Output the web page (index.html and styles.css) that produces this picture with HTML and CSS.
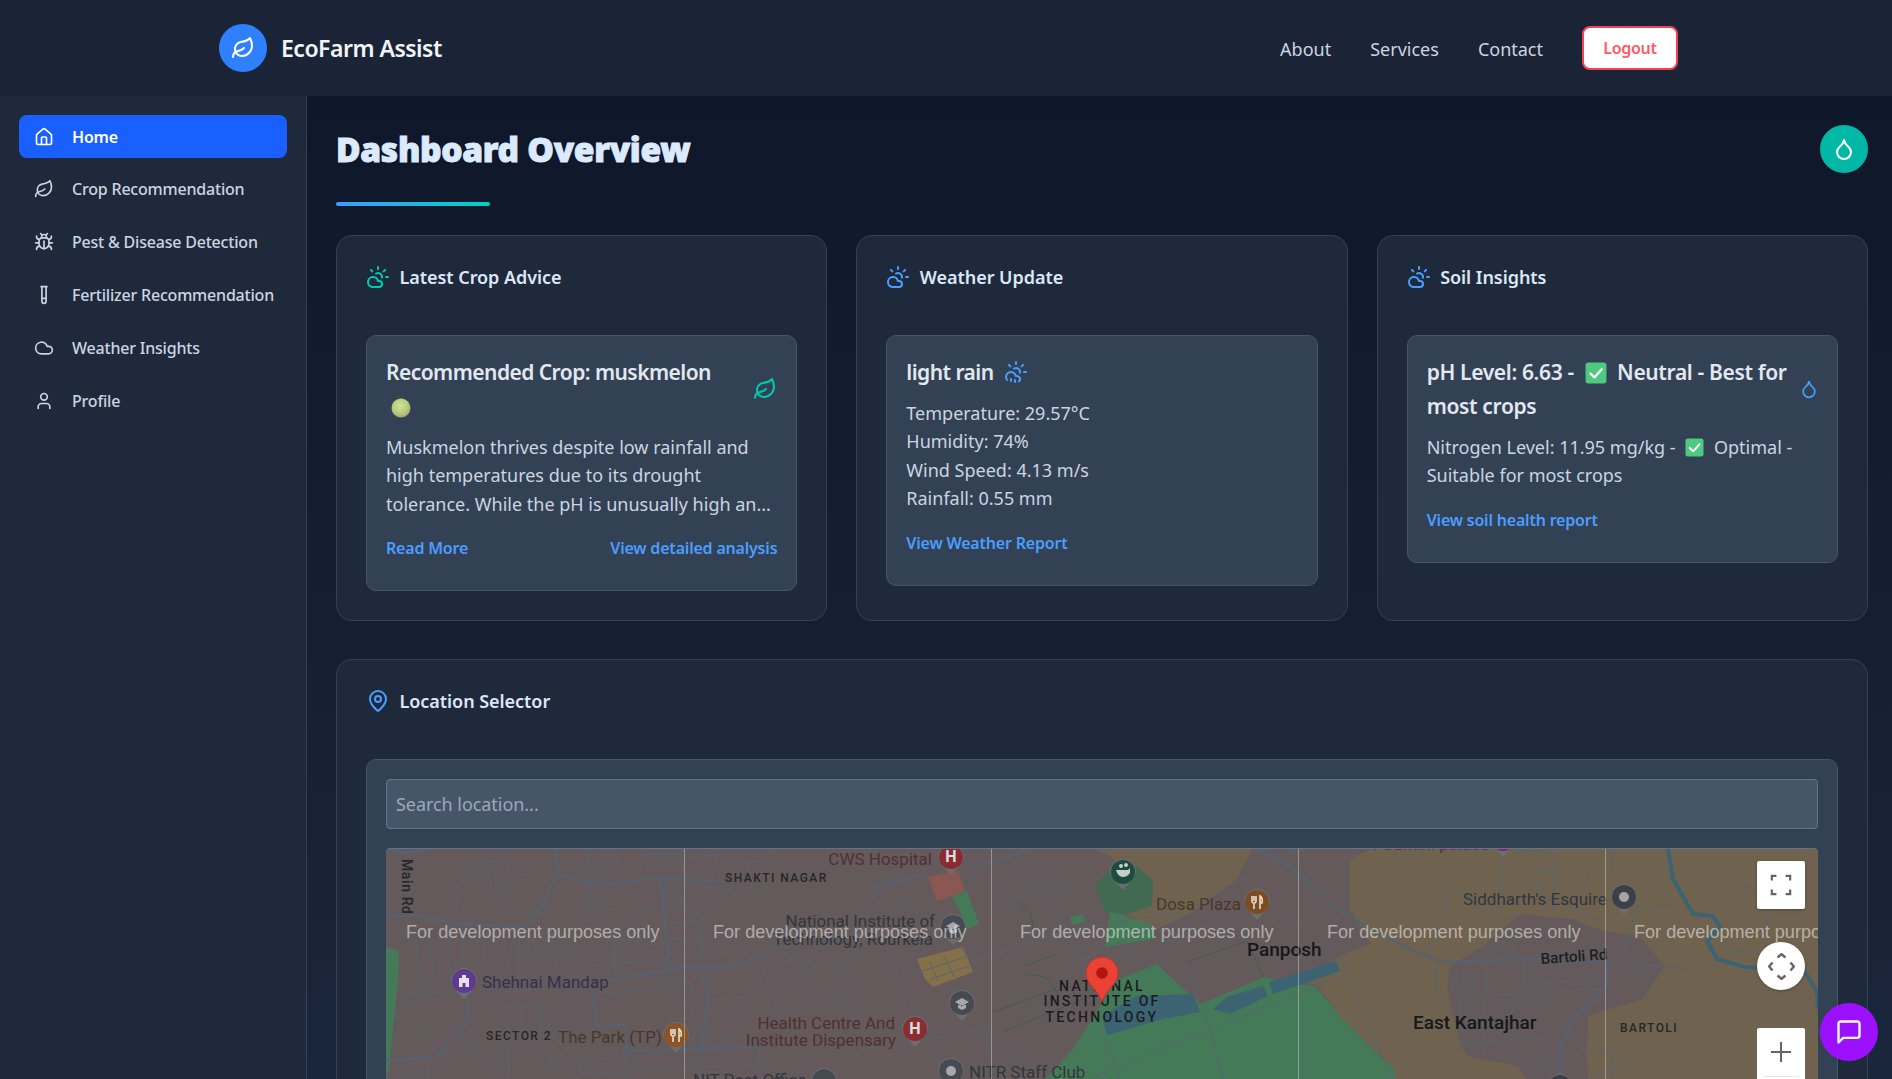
FILE: index.html
```html
<!DOCTYPE html>
<html lang="en">
<head>
<meta charset="utf-8">
<title>EcoFarm Assist</title>
<link rel="stylesheet" href="styles.css">
</head>
<body>
<svg class="sprite" aria-hidden="true">
  <symbol id="i-leaf" viewBox="0 0 24 24"><path d="M11 20A7 7 0 0 1 9.8 6.1C15.5 5 17 4.48 19 2c1 2 2 4.18 2 8 0 5.5-4.78 10-10 10Z"/><path d="M2 21c0-3 1.85-5.36 5.08-6C9.5 14.52 12 13 13 12"/></symbol>
  <symbol id="i-home" viewBox="0 0 24 24"><path d="M15 21v-8a1 1 0 0 0-1-1h-4a1 1 0 0 0-1 1v8"/><path d="M3 10a2 2 0 0 1 .709-1.528l7-5.999a2 2 0 0 1 2.582 0l7 5.999A2 2 0 0 1 21 10v9a2 2 0 0 1-2 2H5a2 2 0 0 1-2-2z"/></symbol>
  <symbol id="i-bug" viewBox="0 0 24 24"><path d="m8 2 1.88 1.88"/><path d="M14.12 3.88 16 2"/><path d="M9 7.13v-1a3.003 3.003 0 1 1 6 0v1"/><path d="M12 20c-3.3 0-6-2.7-6-6v-3a4 4 0 0 1 4-4h4a4 4 0 0 1 4 4v3c0 3.3-2.7 6-6 6"/><path d="M12 20v-9"/><path d="M6.53 9C4.6 8.8 3 7.1 3 5"/><path d="M6 13H2"/><path d="M3 21c0-2.1 1.7-3.9 3.8-4"/><path d="M20.97 5c0 2.1-1.6 3.8-3.5 4"/><path d="M22 13h-4"/><path d="M17.2 17c2.1.1 3.8 1.9 3.8 4"/></symbol>
  <symbol id="i-tube" viewBox="0 0 24 24"><path d="M14.5 2v17.5c0 1.4-1.1 2.5-2.5 2.5c-1.4 0-2.5-1.1-2.5-2.5V2"/><path d="M8.5 2h7"/><path d="M14.5 16h-5"/></symbol>
  <symbol id="i-cloud" viewBox="0 0 24 24"><path d="M17.5 19H9a7 7 0 1 1 6.71-9h1.79a4.5 4.5 0 1 1 0 9Z"/></symbol>
  <symbol id="i-user" viewBox="0 0 24 24"><path d="M19 21v-2a4 4 0 0 0-4-4H9a4 4 0 0 0-4 4v2"/><circle cx="12" cy="7" r="4"/></symbol>
  <symbol id="i-drop" viewBox="0 0 24 24"><path d="M12 22a7 7 0 0 0 7-7c0-2-1-3.9-3-5.5s-3.5-4-4-6.5c-.5 2.5-2 4.9-4 6.5C6 11.1 5 13 5 15a7 7 0 0 0 7 7z"/></symbol>
  <symbol id="i-sun" viewBox="0 0 24 24"><path d="M12 2v2"/><path d="m4.93 4.93 1.41 1.41"/><path d="M20 12h2"/><path d="m19.07 4.93-1.41 1.41"/><path d="M15.947 12.65a4 4 0 0 0-5.925-4.128"/><path d="M13 22H7a5 5 0 1 1 4.9-6H13a3 3 0 0 1 0 6Z"/></symbol>
  <symbol id="i-rain" viewBox="0 0 24 24"><path d="M12 2v2"/><path d="m4.93 4.93 1.41 1.41"/><path d="M20 12h2"/><path d="m19.07 4.93-1.41 1.41"/><path d="M15.947 12.65a4 4 0 0 0-5.925-4.128"/><path d="M3 20a5 5 0 1 1 8.9-4H13a3 3 0 0 1 2 5.24"/><path d="M11 20v2"/><path d="M7 19v2"/></symbol>
  <symbol id="i-pin" viewBox="0 0 24 24"><path d="M20 10c0 6-8 12-8 12s-8-6-8-12a8 8 0 0 1 16 0Z"/><circle cx="12" cy="10" r="3"/></symbol>
  <symbol id="i-chat" viewBox="0 0 24 24"><path d="M21 15a2 2 0 0 1-2 2H7l-4 4V5a2 2 0 0 1 2-2h14a2 2 0 0 1 2 2z"/></symbol>
  <radialGradient id="melon" cx="45%" cy="38%" r="65%"><stop offset="0" stop-color="#d3e29a"/><stop offset=".65" stop-color="#b4ca78"/><stop offset="1" stop-color="#a89a7c"/></radialGradient>
  <symbol id="e-melon" viewBox="0 0 20 24"><path d="M10 5 7 2M10 5l3-3" fill="none" stroke="#6b4a30" stroke-width="1"/><circle cx="10" cy="14" r="9.5" fill="url(#melon)"/></symbol>
  <symbol id="e-check" viewBox="0 0 20 20"><rect x=".5" y=".5" width="19" height="19" rx="2.5" fill="#4fc97f"/><path d="M5 10.5 8.6 14 15.2 6.6" fill="none" stroke="#fff" stroke-width="2" stroke-linecap="round" stroke-linejoin="round"/></symbol>
</svg>

<header class="topbar">
  <div class="brand">
    <span class="brand-logo"><svg class="icon icon-24 stroke-white"><use href="#i-leaf"/></svg></span>
    <span class="brand-name">EcoFarm Assist</span>
  </div>
  <nav class="topnav">
    <a class="topnav-link">About</a>
    <a class="topnav-link">Services</a>
    <a class="topnav-link">Contact</a>
    <button class="logout">Logout</button>
  </nav>
</header>

<div class="shell">
  <aside class="sidebar">
    <a class="side-item active"><svg class="icon icon-20"><use href="#i-home"/></svg>Home</a>
    <a class="side-item"><svg class="icon icon-20"><use href="#i-leaf"/></svg>Crop Recommendation</a>
    <a class="side-item"><svg class="icon icon-20"><use href="#i-bug"/></svg>Pest &amp; Disease Detection</a>
    <a class="side-item"><svg class="icon icon-20"><use href="#i-tube"/></svg>Fertilizer Recommendation</a>
    <a class="side-item"><svg class="icon icon-20"><use href="#i-cloud"/></svg>Weather Insights</a>
    <a class="side-item"><svg class="icon icon-20"><use href="#i-user"/></svg>Profile</a>
  </aside>

  <main class="main">
    <div class="title-row">
      <h1 class="page-title">Dashboard Overview</h1>
      <span class="drop-btn"><svg class="icon icon-24 stroke-white"><use href="#i-drop"/></svg></span>
    </div>
    <div class="title-rule"></div>

    <section class="card-grid">
      <article class="card">
        <h2 class="card-head"><svg class="icon icon-24 stroke-teal"><use href="#i-sun"/></svg>Latest Crop Advice</h2>
        <div class="panel">
          <div class="panel-title">
            <h3 class="panel-heading">Recommended Crop: muskmelon <svg class="emoji melon"><use href="#e-melon"/></svg></h3>
            <svg class="icon icon-24 stroke-teal"><use href="#i-leaf"/></svg>
          </div>
          <p class="panel-text clamp">Muskmelon thrives despite low rainfall and high temperatures due to its drought tolerance. While the pH is unusually high an...</p>
          <div class="panel-links">
            <a class="link">Read More</a>
            <a class="link">View detailed analysis</a>
          </div>
        </div>
      </article>

      <article class="card">
        <h2 class="card-head"><svg class="icon icon-24 stroke-blue"><use href="#i-sun"/></svg>Weather Update</h2>
        <div class="panel">
          <div class="panel-title start">
            <h3 class="panel-heading">light rain</h3>
            <svg class="icon icon-24 stroke-blue"><use href="#i-rain"/></svg>
          </div>
          <p class="panel-text">Temperature: 29.57°C<br>Humidity: 74%<br>Wind Speed: 4.13 m/s<br>Rainfall: 0.55 mm</p>
          <div class="panel-links"><a class="link">View Weather Report</a></div>
        </div>
      </article>

      <article class="card">
        <h2 class="card-head"><svg class="icon icon-24 stroke-blue"><use href="#i-sun"/></svg>Soil Insights</h2>
        <div class="panel">
          <div class="panel-title tight">
            <h3 class="panel-heading heading-wide">pH Level: 6.63 - <svg class="emoji check-lg"><use href="#e-check"/></svg> Neutral - Best for most crops</h3>
            <svg class="icon icon-20 stroke-blue"><use href="#i-drop"/></svg>
          </div>
          <p class="panel-text">Nitrogen Level: 11.95 mg/kg - <svg class="emoji"><use href="#e-check"/></svg> Optimal - Suitable for most crops</p>
          <div class="panel-links"><a class="link">View soil health report</a></div>
        </div>
      </article>
    </section>

    <section class="card location">
      <h2 class="card-head"><svg class="icon icon-24 stroke-blue"><use href="#i-pin"/></svg>Location Selector</h2>
      <div class="panel panel-location">
        <input class="search" type="text" placeholder="Search location...">
        <div class="map">
          <svg class="map-canvas" viewBox="0 0 1432 400" aria-label="Map of Rourkela">
            <rect width="1432" height="400" fill="#645a5b"/>
            <g class="tan">
              <polygon points="711,0 866,0 851,30 807,63 767,82 741,65 765,30 735,15"/>
              <polygon points="964,10 986,0 1432,0 1432,400 1009,400 1009,220 954,168 932,137 915,133 958,105 985,95 964,60"/>
            </g>
            <polygon fill="#645a5b" points="1134,65 1187,70 1217,82 1254,88 1279,117 1257,150 1202,167 1201,207 1202,231 1141,231 1131,217 1081,207 1074,193 1061,140 1064,117 1097,97"/>
            <polygon fill="#857149" points="531,110 577,98 587,123 547,138 539,130"/>
            <polygon fill="#8a5850" points="542,28 572,22 579,42 551,52"/>
            <g class="green">
              <polygon points="0,97 13,103 12,133 3,217 0,231"/>
              <polygon points="566,47 581,42 593,75 582,80"/>
              <polygon points="684,68 697,65 699,73 686,76"/>
              <polygon points="724,62 769,77 767,90 719,98"/>
              <polygon points="659,231 687,200 704,173 729,132 771,115 803,145 815,155 874,130 877,128 911,135 929,137 954,167 974,187 994,207 1009,220 1009,231"/>
            </g>
            <polygon fill="#426a52" points="709,37 724,20 751,17 767,32 766,57 741,65 719,63"/>
            <g class="water">
              <polygon points="716,167 751,147 807,145 814,163 777,170 721,186"/>
              <polygon points="827,160 841,148 877,137 882,147 844,165"/>
              <polygon points="883,133 950,112 954,122 887,145"/>
            </g>
            <path class="river" d="M1282 0 1287 30 1307 65 1327 67 1334 78 1321 92 1331 110 1359 118 1419 123 1431 143 1432 160"/>
            <path class="road-main" d="M170 0 172 20 157 57 138 78M172 25 213 37 273 29 337 33M275 29 282 113 283 123M220 132 297 118 347 117 400 97M0 68 33 66 45 72M43 70 77 75 138 78M313 122 323 143 315 200M82 150 82 173 50 208 0 212M205 143 212 178 240 175M240 202 373 198M0 0 20 4 40 0M487 50 494 37 540 25M580 15 600 15 640 2M954 62 997 87 1054 113 1154 110 1222 113M1222 113 1220 140 1187 170 1174 200 1174 231M870 0 904 17 954 62"/>
            <circle class="road-ring" cx="240" cy="202" r="4"/>
            <path class="road" d="M70 20Q100 14 103 12L120 10 122 40 105 42 102 14M103 16Q75 25 72 40 68 60 77 75L95 60 118 50 122 40M120 28 150 25M200 0 203 60M220 0 220 35M228 0 232 15 250 55M200 17 218 17M200 28 218 28M203 40 210 60 195 60M210 60 228 60M180 75 205 72 225 72 240 65 270 60M255 0 263 25M260 5 293 5M272 8 293 8 293 17 272 17M293 0 298 25M298 10 330 5 360 15 390 5M330 5 333 30M360 15 363 30M315 37 345 40M365 35 367 45M277 40 293 40 296 55M280 55 320 55 323 65 315 72 280 75M283 90 316 88M283 105 316 103 316 88M316 65 316 110M225 92 278 88M228 100 280 95M228 92 228 115 280 110M182 103 230 103 228 130M182 103 185 117 228 115M316 108 342 103 347 115M30 88 33 135M45 88 48 130M60 88 65 130M77 80 77 115M95 85 103 130M118 90 122 125M133 90 133 130M148 90 150 130M165 75 170 125M135 105 175 100 180 115M18 133 60 132M17 147 17 157 35 155 35 143M17 145 120 143 160 140M122 158 155 158 170 190 185 205M122 158 122 185M135 158 135 180M153 158 155 180M60 170 85 192 100 215M33 180 65 210M85 200 70 218M100 195 165 200 165 220M123 198 123 231M165 215 240 208M190 143 190 190M243 133 243 145M208 145 290 140 283 130M282 133 305 133 307 155 285 155M307 155 307 190 290 190M283 170 307 168M322 150 360 148 367 157 340 165 322 165M320 190 350 190M240 175 240 231M190 208 195 225 240 223 375 215M313 200 315 231M20 215 20 231M30 205 30 231M43 210 43 231M100 225 120 215M373 198 375 231M377 120 480 83M377 120 393 167 480 140M393 167 430 231M445 115 470 180M403 135 480 105M405 135 408 148M500 97 530 167 554 217M534 50 587 113M587 113 687 80 794 63M617 33 644 23 656 40 629 50 617 33M651 13 687 97 714 153M607 67 630 52M677 27 670 40M654 38 695 38M694 112 791 67M707 120 860 63 884 43M807 63 841 37 860 30 911 0M704 230 954 127M714 177 734 231M796 110 826 187 837 231M474 200 604 180 607 231M607 203 637 207 651 223M887 80 911 70 927 77M954 107 1007 231M1014 23 1021 5 1031 10M1044 103 1064 38 1087 50 1110 75 1134 65M1051 117 1051 143 1077 183M1111 67 1117 10M1137 23 1171 18 1167 67M1174 17 1174 37M1187 20 1184 33M1206 20 1194 50M1127 0 1167 5 1166 23M1137 32 1161 35M1141 40 1187 60 1217 73M1101 100 1111 70M1117 90 1119 110M1127 93 1127 110M1067 127 1067 140 1084 140M1071 117 1074 200M1086 113 1086 197M1101 113 1101 147M1137 113 1137 137 1217 128M1101 147 1161 143 1217 140M1161 143 1154 157 1131 150 1124 167M1074 193 1161 190M1097 150 1097 207M1154 193 1154 213 1141 213 1171 213M1194 200 1227 203 1227 230M1241 207 1239 217 1194 231M1226 113 1306 120M1256 117 1256 130M1237 107 1251 57 1286 55M1237 90 1247 93M1227 0 1227 23 1241 13M1352 32 1371 43M1337 98 1351 102 1374 100M1404 177 1412 173M1384 60 1376 90M390 130 404 125 430 118M0 133 12 132M500 50 520 60 530 40M543 112 552 132M558 106 568 128M536 122 582 107M545 130 586 116"/>
            <path class="trail" d="M631 53 645 65 648 85M607 163 670 140M617 183 704 147M640 117 670 105M640 125 660 128 672 145M801 113 861 92M861 92 877 128"/>

            <g class="labels">
              <text class="lbl lbl-dark" transform="translate(16 10) rotate(90)">Main Rd</text>
              <text class="lbl-caps" x="339" y="33">SHAKTI NAGAR</text>
              <text class="lbl lbl-red" x="546" y="16" text-anchor="end">CWS Hospital</text>
              <text class="lbl lbl-grey" x="549" y="78" text-anchor="end">National Institute of</text>
              <text class="lbl lbl-grey" x="547" y="96" text-anchor="end">Technology, Rourkela</text>
              <text class="lbl lbl-purple" x="96" y="139">Shehnai Mandap</text>
              <text class="lbl-caps" x="100" y="191">SECTOR 2</text>
              <text class="lbl lbl-brown" x="172" y="194">The Park (TP)</text>
              <text class="lbl lbl-red" x="509" y="180" text-anchor="end">Health Centre And</text>
              <text class="lbl lbl-red" x="510" y="197" text-anchor="end">Institute Dispensary</text>
              <text class="lbl lbl-grey" x="307" y="237">NIT Post Office</text>
              <text class="lbl lbl-grey" x="583" y="229">NITR Staff Club</text>
              <text class="lbl lbl-brown" x="770" y="61">Dosa Plaza</text>
              <text class="lbl lbl-grey" x="1077" y="56">Siddharth's Esquire</text>
              <text class="lbl lbl-pink" x="987" y="1">Padmini palace</text>
              <text class="lbl-town" x="861" y="107">Panposh</text>
              <text class="lbl-town" x="1027" y="180">East Kantajhar</text>
              <text class="lbl-road" transform="translate(1155 115) rotate(-4)">Bartoli Rd</text>
              <text class="lbl-caps" x="1234" y="183">BARTOLI</text>
              <text class="lbl-inst" x="716" y="142" text-anchor="middle">NATIONAL</text>
              <text class="lbl-inst" x="716" y="157" text-anchor="middle">INSTITUTE OF</text>
              <text class="lbl-inst" x="716" y="173" text-anchor="middle">TECHNOLOGY</text>
            </g>

            <g class="pins">
              <g transform="translate(78 132)"><path class="pin-shape" d="M-13 0A13 13 0 1 1 13 0Q12 6 0 18-12 6-13 0Z"/><circle r="12" fill="#5f3a91"/><path d="M-5 6V-3H-2V-6H2V-3H5V6ZM-1.5 6V2H1.5V6Z" fill="#e8e2f0" fill-rule="evenodd"/></g>
              <g transform="translate(290 186)"><path class="pin-shape" d="M-13 0A13 13 0 1 1 13 0Q12 6 0 18-12 6-13 0Z"/><circle r="12" fill="#8a5426"/><path d="M-5-6V-1Q-5 1-3 1V7M-3-6V-1M-1-6V-1Q-1 1-3 1M3 7V-6Q6-4 5 1H3" class="pin-glyph"/></g>
              <g transform="translate(565 8)"><path class="pin-shape" d="M-13 0A13 13 0 1 1 13 0Q12 6 0 18-12 6-13 0Z"/><circle r="12" fill="#8a2d33"/><text class="pin-h" text-anchor="middle" y="5">H</text></g>
              <g transform="translate(567 78)"><path class="pin-shape" d="M-13 0A13 13 0 1 1 13 0Q12 6 0 18-12 6-13 0Z"/><circle r="12" fill="#464a51"/><path d="M-7-1 0-5 7-1 0 3ZM-4 2V5L0 7 4 5V2" fill="#a8a8aa"/></g>
              <g transform="translate(576 154)"><path class="pin-shape" d="M-13 0A13 13 0 1 1 13 0Q12 6 0 18-12 6-13 0Z"/><circle r="12" fill="#464a51"/><path d="M-7-1 0-5 7-1 0 3ZM-4 2V5L0 7 4 5V2" fill="#a8a8aa"/></g>
              <g transform="translate(529 180)"><path class="pin-shape" d="M-13 0A13 13 0 1 1 13 0Q12 6 0 18-12 6-13 0Z"/><circle r="12" fill="#8a2d33"/><text class="pin-h" text-anchor="middle" y="5">H</text></g>
              <g transform="translate(565 222)"><path class="pin-shape" d="M-13 0A13 13 0 1 1 13 0Q12 6 0 18-12 6-13 0Z"/><circle r="12" fill="#464a51"/><circle r="5" fill="#a8a8aa"/></g>
              <g transform="translate(438 232)"><path class="pin-shape" d="M-13 0A13 13 0 1 1 13 0Q12 6 0 18-12 6-13 0Z"/><circle r="12" fill="#464a51"/></g>
              <g transform="translate(737 23)"><path class="pin-shape" d="M-13 0A13 13 0 1 1 13 0Q12 6 0 18-12 6-13 0Z"/><circle r="12" fill="#1e4c40"/><path d="M-7-2H5L7-4V1Q4 5 0 5-5 5-7-2ZM-4-6A2 2 0 1 1-4-5.9ZM1-7A2 2 0 1 1 1-6.9Z" fill="#c3cfc8"/></g>
              <g transform="translate(871 53)"><path class="pin-shape" d="M-13 0A13 13 0 1 1 13 0Q12 6 0 18-12 6-13 0Z"/><circle r="12" fill="#7c4c22"/><path d="M-5-6V-1Q-5 1-3 1V7M-3-6V-1M-1-6V-1Q-1 1-3 1M3 7V-6Q6-4 5 1H3" class="pin-glyph"/></g>
              <g transform="translate(1238 48)"><path class="pin-shape" d="M-13 0A13 13 0 1 1 13 0Q12 6 0 18-12 6-13 0Z"/><circle r="12" fill="#3d4048"/><circle r="5" fill="#a5a5a5"/></g>
              <g transform="translate(1117 -10)"><path class="pin-shape" d="M-13 0A13 13 0 1 1 13 0Q12 6 0 18-12 6-13 0Z"/><circle r="12" fill="#8a1f66"/></g>
              <g transform="translate(1174 238)"><path class="pin-shape" d="M-13 0A13 13 0 1 1 13 0Q12 6 0 18-12 6-13 0Z"/><circle r="12" fill="#3d4048"/></g>
            </g>

            <path class="lines" d="M298.5 0V400M605.5 0V400M912.5 0V400M1219.5 0V400"/>
            <g class="watermark">
              <text x="20" y="89">For development purposes only</text>
              <text x="327" y="89">For development purposes only</text>
              <text x="634" y="89">For development purposes only</text>
              <text x="941" y="89">For development purposes only</text>
              <text x="1248" y="89">For development purposes only</text>
            </g>
            <path d="M716 153C712 140 700 136 700 124A16 16 0 0 1 732 124C732 136 720 140 716 153Z" fill="#ea4335" stroke="#c5332a" stroke-width="1"/>
            <circle cx="716" cy="124" r="5.8" fill="#b31412"/>
          </svg>

          <button class="map-ctl map-full" aria-label="Fullscreen">
            <svg viewBox="0 0 24 24" class="ctl-icon"><path d="M2 7V2H7M17 2H22V7M22 17V22H17M7 22H2V17"/></svg>
          </button>
          <button class="map-ctl map-pan" aria-label="Pan">
            <svg viewBox="0 0 24 24" class="ctl-icon pan"><path d="M8.5 4 12 1 15.5 4M8.5 20 12 23 15.5 20M4 8.5 1 12 4 15.5M20 8.5 23 12 20 15.5"/></svg>
          </button>
          <div class="map-ctl map-zoom">
            <svg viewBox="0 0 24 24" class="ctl-icon plus"><path d="M12 1V23M1 12H23"/></svg>
            <span class="zoom-sep"></span>
          </div>
        </div>
      </div>
    </section>
  </main>
</div>

<button class="chat-fab" aria-label="Chat"><svg class="icon icon-28 stroke-white"><use href="#i-chat"/></svg></button>
</body>
</html>
```

FILE: styles.css
```css
* { box-sizing: border-box; }
html, body { margin: 0; height: 100%; }
body {
  display: flex;
  flex-direction: column;
  height: 100vh;
  overflow: hidden;
  background: #0f172a;
  color: #e2e8f0;
  font-family: "Noto Sans", "Open Sans", sans-serif;
}
.sprite { position: absolute; width: 0; height: 0; }
.icon { flex: none; fill: none; stroke: currentColor; stroke-width: 2; stroke-linecap: round; stroke-linejoin: round; }
.icon-20 { width: 20px; height: 20px; }
.icon-24 { width: 24px; height: 24px; }
.icon-28 { width: 28px; height: 28px; }
.stroke-white { color: #fff; }
.stroke-teal { color: #00c9b1; }
.stroke-blue { color: #4a9eff; }
.emoji { width: 19px; height: 19px; vertical-align: -3px; margin: 0 5px; }
.check-lg { width: 22px; height: 22px; vertical-align: -4px; margin: 0 5px 0 6px; }
.melon { width: 20px; height: 24px; vertical-align: -4px; margin: 0 2px 0 5px; }

/* Top bar */
.topbar {
  flex: none;
  height: 96px;
  display: flex;
  align-items: center;
  justify-content: space-between;
  padding: 0 214px 0 219px;
  background: #1b2437;
}
.brand { display: flex; align-items: center; gap: 14px; }
.brand-logo {
  width: 48px; height: 48px;
  display: flex; align-items: center; justify-content: center;
  border-radius: 50%;
  background: #2f80ff;
}
.brand-name { font-size: 23px; font-weight: 600; letter-spacing: -.5px; color: #f1f5f9; }
.topnav { display: flex; align-items: center; }
.topnav-link { font-size: 18px; color: #cbd5e1; margin-right: 39px; margin-top: 2px; }
.logout {
  width: 96px; height: 44px;
  margin-top: -1px;
  border: 2px solid #ef4455;
  border-radius: 8px;
  background: #fff;
  color: #ff5a65;
  font: 600 16px "Noto Sans", sans-serif;
  letter-spacing: -.3px;
}

/* Shell */
.shell { flex: 1; min-height: 0; display: flex; }
.sidebar {
  flex: none;
  width: 307px;
  display: flex;
  flex-direction: column;
  gap: 9.85px;
  padding: 19px;
  background: #1e293b;
  border-right: 1px solid #334155;
}
.side-item {
  display: flex;
  align-items: center;
  gap: 18px;
  height: 43px;
  padding-left: 15px;
  border-radius: 8px;
  color: #cbd5e1;
  font-size: 16px;
  font-weight: 500;
  letter-spacing: -.2px;
  white-space: nowrap;
}
.side-item.active { background: #1a5fff; color: #fff; font-weight: 600; }

/* Main */
.main {
  flex: 1;
  min-width: 0;
  overflow: hidden;
  padding: 29px 24px 0 29px;
  background: linear-gradient(180deg, #0f172a 0%, #1a263b 100%);
}
.title-row { display: flex; align-items: center; justify-content: space-between; height: 48px; }
.page-title {
  margin: 0;
  font-size: 33.5px;
  font-weight: 900;
  letter-spacing: -.3px;
  color: #dbeafe;
  -webkit-text-stroke: 1px #dbeafe;
  text-shadow: 0 1px 2px rgba(0,0,0,.4);
}
.drop-btn {
  width: 48px; height: 48px;
  display: flex; align-items: center; justify-content: center;
  border-radius: 50%;
  background: #00b8a5;
}
.title-rule {
  width: 154px; height: 4px;
  margin-top: 29px;
  border-radius: 2px;
  background: linear-gradient(90deg, #3f9bff, #00d1c0);
}

/* Cards */
.card-grid {
  display: grid;
  grid-template-columns: repeat(3, minmax(0, 1fr));
  gap: 29px;
  margin-top: 29px;
}
.card {
  padding: 29px;
  border: 1px solid #334155;
  border-radius: 16px;
  background: #1e293b;
}
.card-head {
  display: flex;
  align-items: center;
  gap: 9.5px;
  height: 23px;
  margin: 0 0 47px;
  font-size: 18px;
  font-weight: 600;
  letter-spacing: -.05px;
  color: #dbe7f7;
}
.panel {
  padding: 19px 19px 28px;
  border: 1px solid #475569;
  border-radius: 10px;
  background: #334155;
}
.panel-location { padding-bottom: 19px; }
.panel-title { display: flex; align-items: center; justify-content: space-between; gap: 16px; }
.panel-title.start { justify-content: flex-start; gap: 10px; }
.panel-title.tight { gap: 3px; }
.panel-title.tight .icon { margin-right: -1px; }
.panel-heading {
  margin: 0;
  font-size: 21px;
  font-weight: 600;
  line-height: 34px;
  letter-spacing: -.55px;
  color: #e2e8f0;
}
.heading-wide { letter-spacing: -.35px; }
.panel-text {
  margin: 9.5px 0 0;
  font-size: 18px;
  line-height: 28.6px;
  color: #cbd5e1;
}
.clamp {
  display: -webkit-box;
  -webkit-box-orient: vertical;
  -webkit-line-clamp: 3;
  overflow: hidden;
}
.panel-links { display: flex; justify-content: space-between; margin-top: 16px; line-height: 28px; }
.link { font-size: 16px; font-weight: 600; letter-spacing: -.2px; color: #4a9eff; }

/* Location */
.location { margin-top: 38px; }
.search {
  display: block;
  width: 100%;
  height: 50px;
  padding: 0 9px;
  border: 1px solid #64748b;
  border-radius: 4px;
  background: #475569;
  color: #e2e8f0;
  font: 18px "Noto Sans", sans-serif;
  letter-spacing: -.05px;
}
.search::placeholder { color: #9aa8bc; }
.map {
  position: relative;
  height: 400px;
  margin-top: 19px;
  overflow: hidden;
  border-top: 1px solid #64748b;
  border-radius: 4px;
}
.map-canvas { display: block; width: 100%; height: 400px; font-family: Roboto, sans-serif; }
.tan polygon { fill: #6f634f; }
.green polygon { fill: #457a58; }
.water polygon { fill: #3c6371; }
.river { fill: none; stroke: #3c6371; stroke-width: 4; }
.road-main { fill: none; stroke: #56626f; stroke-width: 2.4; }
.road-ring { fill: none; stroke: #56626f; stroke-width: 1.8; }
.road { fill: none; stroke: #58646f; stroke-width: 1; }
.trail { fill: none; stroke: #3f5a52; stroke-width: .9; }
.lbl { font-size: 17px; }
.lbl-dark { fill: #24262b; font-size: 14px; font-weight: 500; letter-spacing: .6px; }
.lbl-red { fill: #4f3033; }
.lbl-grey { fill: #32363d; }
.lbl-purple { fill: #34304f; }
.lbl-brown { fill: #46382a; }
.lbl-pink { fill: #702060; }
.lbl-caps { fill: #25272c; font-size: 12px; font-weight: 500; letter-spacing: 1.45px; }
.lbl-town { fill: #16181b; font-size: 19px; font-weight: 500; }
.lbl-road { fill: #1d1e22; font-size: 15.2px; font-weight: 500; }
.lbl-inst { fill: #1a1b1f; font-size: 14px; font-weight: 500; letter-spacing: 2.3px; }
.pin-shape { fill: #6d6d70; }
.pin-h { fill: #ddd; font-size: 16px; font-weight: 700; }
.pin-glyph { fill: none; stroke: #e6dccf; stroke-width: 1.6; }
.lines { stroke: rgba(255,255,255,.35); stroke-width: 1; }
.watermark { fill: rgba(255,255,255,.5); font-family: "Liberation Sans", Arial, sans-serif; font-size: 18.1px; }
.map-ctl {
  position: absolute;
  right: 13px;
  width: 48px;
  padding: 0;
  border: 0;
  background: #fff;
  display: flex;
  align-items: center;
  justify-content: center;
}
.map-full { top: 12px; height: 48px; border-radius: 2px; box-shadow: 0 1px 3px rgba(0,0,0,.3); }
.map-pan { top: 93px; height: 48px; border-radius: 50%; box-shadow: 0 1px 3px rgba(0,0,0,.3); }
.map-zoom { top: 179px; height: 96px; align-items: flex-start; padding-top: 13px; border-radius: 2px; }
.ctl-icon { width: 22px; height: 22px; fill: none; stroke: #666; stroke-width: 2.4; }
.pan { width: 27px; height: 27px; stroke-width: 2.2; }
.plus { stroke-width: 2.2; }
.zoom-sep { position: absolute; top: 48px; left: 6px; right: 6px; height: 1px; background: #e6e6e6; }

.chat-fab {
  position: fixed;
  right: 14px;
  bottom: 18px;
  width: 58px; height: 58px;
  display: flex; align-items: center; justify-content: center;
  padding: 0;
  border: 0;
  border-radius: 50%;
  background: #9b10ff;
}
```
